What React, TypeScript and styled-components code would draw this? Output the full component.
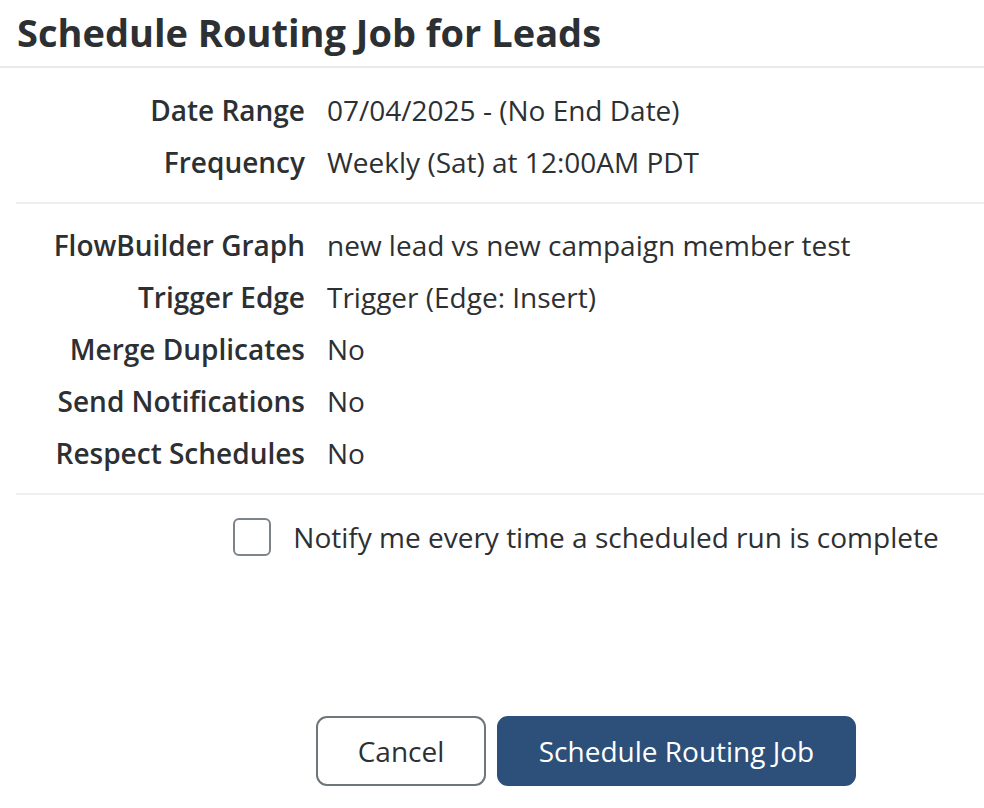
import React from "react";
import styled, { createGlobalStyle } from "styled-components";

const GlobalStyle = createGlobalStyle`
    html, body {
        margin: 0;
        padding: 0;
        background: #ffffff;
        font-family: "Open Sans", "Liberation Sans", sans-serif;
        color: #2d3033;
    }
`

export const Page = styled.div`
    width: 984px;
    height: 808px;
    display: flex;
    flex-direction: column;
    overflow: hidden;
`

export const Header = styled.header`
    height: 68px;
    display: flex;
    align-items: center;
    padding-left: 17px;
    padding-bottom: 2px;
    border-bottom: 2px solid #e9eaeb;
    box-sizing: border-box;
`

export const Title = styled.h1`
    margin: 0;
    font-size: 38px;
    font-weight: 700;
    color: #2d3033;
`

export const Section = styled.section`
    margin-left: 16px;
    padding: 16px 0 14px;
    border-bottom: 2px solid #eeeff0;
    display: grid;
    grid-template-columns: 289px 1fr;
    column-gap: 22px;
    grid-auto-rows: 52px;
    align-items: center;

    & + & {
        padding-top: 15px;
    }
`

export const Label = styled.div`
    text-align: right;
    font-size: 28px;
    font-weight: 600;
    color: #2d3033;
`

export const Value = styled.div`
    font-size: 28px;
    font-weight: 400;
    color: #2d3033;
`

export const Footer = styled.div`
    flex: 1;
    display: flex;
    flex-direction: column;
    align-items: center;
    padding-left: 188px;
`

export const NotifyRow = styled.label`
    margin-top: 23px;
    display: flex;
    align-items: center;
    gap: 22px;
    font-size: 28px;
    color: #2d3033;
    cursor: pointer;
`

export const CheckBox = styled.span`
    width: 38px;
    height: 38px;
    box-sizing: border-box;
    border: 2px solid #7d8489;
    border-radius: 6px;
    background: #fff;
`

export const Actions = styled.div`
    margin-top: auto;
    margin-bottom: 22px;
    display: flex;
    gap: 11px;
`

type TButtonProps = {
    /** Botão principal */
    primary?: boolean
}

export const Button = styled.button<TButtonProps>`
    height: 70px;
    width: ${({ primary }) => (primary ? "359px" : "170px")};
    padding: 0;
    border-radius: 11px;
    font-family: inherit;
    font-size: 28px;
    cursor: pointer;
    box-sizing: border-box;
    border: 2px solid ${({ primary }) => (primary ? "#2c5079" : "#6f7679")};
    background: ${({ primary }) => (primary ? "#2c5079" : "#ffffff")};
    color: ${({ primary }) => (primary ? "#ffffff" : "#2d3033")};
`

const schedule = [
    ["Date Range", "07/04/2025 - (No End Date)"],
    ["Frequency", "Weekly (Sat) at 12:00AM PDT"],
]

const details = [
    ["FlowBuilder Graph", "new lead vs new campaign member test"],
    ["Trigger Edge", "Trigger (Edge: Insert)"],
    ["Merge Duplicates", "No"],
    ["Send Notifications", "No"],
    ["Respect Schedules", "No"],
]

export default function App() {
    return (
        <>
            <GlobalStyle />
            <Page>
                <Header>
                    <Title>Schedule Routing Job for Leads</Title>
                </Header>
                <Section>
                    {schedule.map(([label, value]) => (
                        <React.Fragment key={label}>
                            <Label>{label}</Label>
                            <Value>{value}</Value>
                        </React.Fragment>
                    ))}
                </Section>
                <Section>
                    {details.map(([label, value]) => (
                        <React.Fragment key={label}>
                            <Label>{label}</Label>
                            <Value>{value}</Value>
                        </React.Fragment>
                    ))}
                </Section>
                <Footer>
                    <NotifyRow>
                        <CheckBox />
                        Notify me every time a scheduled run is complete
                    </NotifyRow>
                    <Actions>
                        <Button>Cancel</Button>
                        <Button primary>Schedule Routing Job</Button>
                    </Actions>
                </Footer>
            </Page>
        </>
    )
}
